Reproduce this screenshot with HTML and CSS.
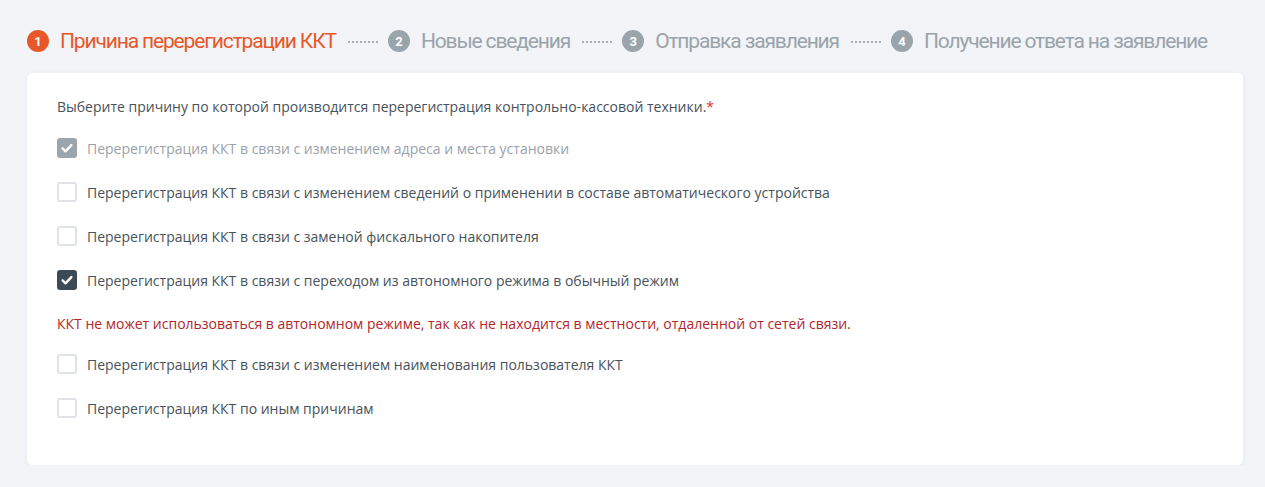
FILE: index.html
```html
<!DOCTYPE html>
<html lang="ru">
<head>
<meta charset="utf-8">
<link rel="stylesheet" href="styles.css">
</head>
<body>
<div class="page">
  <nav class="steps">
    <div class="step active"><span class="num">1</span><span class="label">Причина перерегистрации ККТ</span></div>
    <span class="dots"></span>
    <div class="step"><span class="num">2</span><span class="label">Новые сведения</span></div>
    <span class="dots"></span>
    <div class="step"><span class="num">3</span><span class="label">Отправка заявления</span></div>
    <span class="dots"></span>
    <div class="step"><span class="num">4</span><span class="label">Получение ответа на заявление</span></div>
  </nav>
  <section class="card">
    <p class="question">Выберите причину по которой производится перерегистрация контрольно-кассовой техники.<span class="req">*</span></p>
    <ul class="options">
      <li class="opt disabled"><span class="box checked"><svg viewBox="0 0 16 16"><path d="M3.6 8.4l2.9 2.9 5.9-6.2" /></svg></span>Перерегистрация ККТ в связи с изменением адреса и места установки</li>
      <li class="opt"><span class="box"></span>Перерегистрация ККТ в связи с изменением сведений о применении в составе автоматического устройства</li>
      <li class="opt"><span class="box"></span>Перерегистрация ККТ в связи с заменой фискального накопителя</li>
      <li class="opt"><span class="box checked"><svg viewBox="0 0 16 16"><path d="M3.6 8.4l2.9 2.9 5.9-6.2" /></svg></span>Перерегистрация ККТ в связи с переходом из автономного режима в обычный режим</li>
      <li class="error">ККТ не может использоваться в автономном режиме, так как не находится в местности, отдаленной от сетей связи.</li>
      <li class="opt"><span class="box"></span>Перерегистрация ККТ в связи с изменением наименования пользователя ККТ</li>
      <li class="opt"><span class="box"></span>Перерегистрация ККТ по иным причинам</li>
    </ul>
  </section>
</div>
</body>
</html>
```

FILE: styles.css
```css
* { box-sizing: border-box; }
html, body { margin: 0; padding: 0; }
body {
  background: #f2f4f8;
  font-family: "Open Sans", "Noto Sans", sans-serif;
  color: #48525a;
}
.page {
  padding: 28px 22px 0 27px;
  width: 1265px;
}
.steps {
  display: flex;
  align-items: center;
  height: 26px;
  margin-bottom: 19px;
}
.step {
  display: flex;
  align-items: center;
  gap: 11px;
  color: #9aa3aa;
  font-family: "Roboto", sans-serif;
  font-size: 21px;
  letter-spacing: -1.15px;
  white-space: nowrap;
}
.step .num {
  width: 22px;
  height: 22px;
  border-radius: 50%;
  background: #9aa4ab;
  color: #fff;
  font-family: "Roboto", sans-serif;
  font-weight: 700;
  font-size: 13px;
  letter-spacing: 0;
  display: flex;
  align-items: center;
  justify-content: center;
  flex: none;
}
.step.active { color: #e8572a; }
.step.active .num { background: #e8572a; }
.dots {
  width: 30px;
  margin: 2px 10px 0 12px;
  border-top: 2px dotted #a8b0b6;
  height: 0;
}
.card {
  width: 1216px;
  height: 392px;
  background: #fff;
  border-radius: 5px;
  box-shadow: 0 1px 4px rgba(150, 160, 180, 0.18);
  padding: 24px 30px 0;
}
.question {
  margin: 0 0 21px;
  font-size: 14px;
  line-height: 20px;
  color: #48525a;
}
.req { color: #d9322b; }
.options {
  list-style: none;
  margin: 0;
  padding: 0;
  display: flex;
  flex-direction: column;
  gap: 24px;
}
.opt {
  display: flex;
  align-items: center;
  gap: 10px;
  height: 20px;
  font-size: 14px;
  color: #48525a;
}
.opt.disabled { color: #9aa2a9; }
.box {
  width: 20px;
  height: 20px;
  border: 2px solid #e0e3e6;
  border-radius: 3px;
  flex: none;
  display: flex;
}
.box.checked {
  background: #3c4a55;
  border-color: #3c4a55;
}
.opt.disabled .box.checked {
  background: #9ba5ad;
  border-color: #9ba5ad;
}
.box svg {
  width: 16px;
  height: 16px;
}
.box svg path {
  fill: none;
  stroke: #fff;
  stroke-width: 2.4;
  stroke-linecap: round;
  stroke-linejoin: round;
}
.error {
  font-size: 14px;
  line-height: 20px;
  color: #b3262a;
  height: 20px;
  margin: 0 0 -4px;
}
```
